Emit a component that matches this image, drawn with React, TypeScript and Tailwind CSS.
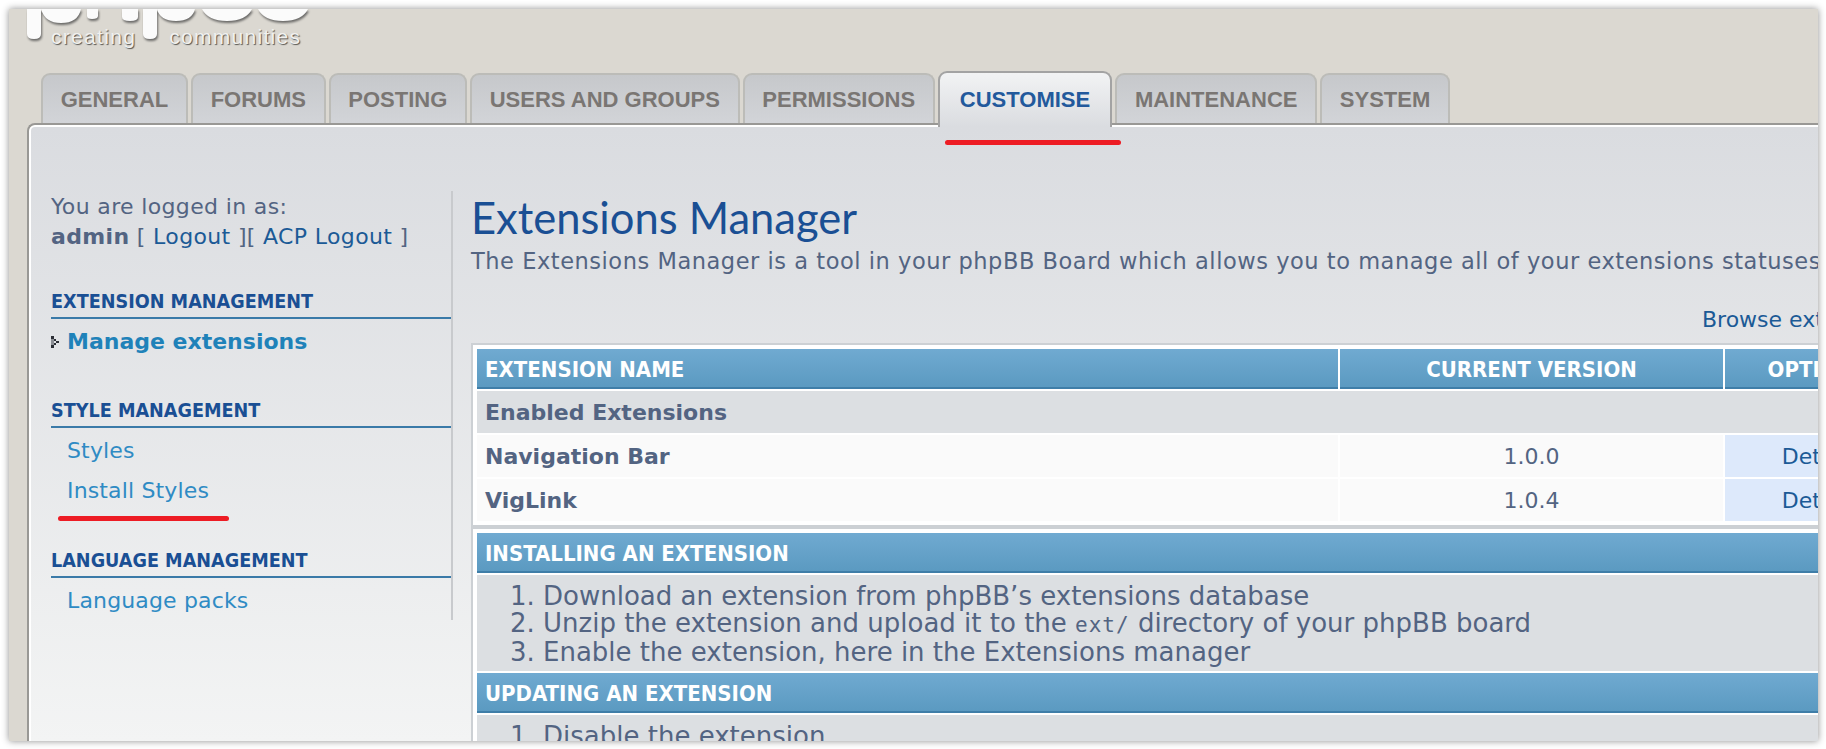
const tabs = ['GENERAL', 'FORUMS', 'POSTING', 'USERS AND GROUPS', 'PERMISSIONS', 'CUSTOMISE', 'MAINTENANCE', 'SYSTEM']

const rows = [
  { name: 'Navigation Bar', version: '1.0.0' },
  { name: 'VigLink', version: '1.0.4' },
]

function Logo() {
  return (
    <div className="relative h-[62px]">
      <svg width="320" height="40" viewBox="9 9 320 40" className="absolute top-0 left-0 drop-shadow-[1px_2px_1px_rgba(70,70,70,0.75)]">
        <path
          fill="#fbfbfb"
          d="M27 0H41V34Q41 39 34 39Q27 39 27 34Z M41 9Q45 23 61 23Q78 23 81 9Z M87 9H98V16Q98 19 92 19Q87 19 87 16Z M122 9H138V17Q138 21 130 21Q122 21 122 17Z M143 0H157V34Q157 39 150 39Q143 39 143 34Z M157 9Q160 21 176 21Q192 21 195 9Z M202 9Q208 21 227 21Q246 21 252 9Z M258 9Q264 21 283 21Q302 21 308 9Z"
        />
      </svg>
      <div className="absolute top-[16px] left-[42px] flex gap-[33px] font-['Liberation_Sans',sans-serif] text-[21px] leading-[24px] tracking-[1.3px] text-[#f1f1ef] [text-shadow:1px_1px_1px_#55534f]">
        <span>creating</span>
        <span>communities</span>
      </div>
    </div>
  )
}

function Tabs() {
  return (
    <div className="relative z-10 flex h-[52px] items-end gap-[3px] pl-[32px] font-['Liberation_Sans',sans-serif] text-[22px] leading-[24px] font-bold">
      {tabs.map(t =>
        t === 'CUSTOMISE' ? (
          <div key={t} className="-mb-[4px] h-[56px] rounded-t-[9px] border-2 border-b-0 border-[#a3a3a3] bg-gradient-to-b from-[#f2f3f4] to-[#dadce0] px-[20px] pt-[15px] text-[#22599c]">
            {t}
          </div>
        ) : (
          <div key={t} className="h-[50px] rounded-t-[9px] border-2 border-b-0 border-[#bcbcb8] bg-gradient-to-b from-[#c6c8cb] to-[#d2d4d8] px-[17.7px] pt-[13px] text-[#7a7673]">
            {t}
          </div>
        ),
      )}
    </div>
  )
}

function MenuHeading({ children }: { children: string }) {
  return (
    <h2 className="h-[30px] border-b-2 border-[#3a7aa8] font-['DejaVu_Sans_Condensed','DejaVu_Sans',sans-serif] text-[19.6px] leading-[26px] font-bold text-[#1a4f94]">
      {children}
    </h2>
  )
}

function MenuLink({ children }: { children: string }) {
  return <a className="block h-[40px] pl-[16px] text-[22px] leading-[40px] tracking-[0.15px] text-[#2f8bc4]">{children}</a>
}

function Sidebar() {
  return (
    <aside className="mt-[64px] h-[429px] w-[402px] shrink-0 border-r-2 border-[#c8cacd] pt-[1px] text-[22px]">
      <p className="leading-[30px] tracking-[0.35px] whitespace-nowrap text-[#536482]">
        You are logged in as:
        <br />
        <b>admin</b> [ <span className="text-[#1b5a96]">Logout</span> ][ <span className="text-[#1b5a96]">ACP Logout</span> ]
      </p>
      <div className="mt-[37px]">
        <MenuHeading>EXTENSION MANAGEMENT</MenuHeading>
        <a className="flex h-[46px] items-center pb-[1px] font-bold text-[#1f82b9]">
          <svg width="8" height="12" viewBox="0 0 8 12" className="mr-[8px] shrink-0" shapeRendering="crispEdges">
            <path fill="#2c2f36" d="M0 0h3v3H0zM3 3h2v2H3zM5 5h3v2H5zM3 7h2v2H3zM0 9h3v3H0z" />
            <path fill="#8d9096" d="M0 3h3v6H0z" />
          </svg>
          Manage extensions
        </a>
      </div>
      <div className="mt-[33px]">
        <MenuHeading>STYLE MANAGEMENT</MenuHeading>
        <div className="pt-[3px]">
          <MenuLink>Styles</MenuLink>
          <MenuLink>Install Styles</MenuLink>
        </div>
      </div>
      <div className="mt-[37px]">
        <MenuHeading>LANGUAGE MANAGEMENT</MenuHeading>
        <div className="pt-[3px]">
          <MenuLink>Language packs</MenuLink>
        </div>
      </div>
    </aside>
  )
}

const headCell = "flex h-[40px] items-center border-b-2 border-[#3f7ea8] bg-gradient-to-b from-[#70aad1] to-[#5b9ac1] pt-[2px] font-['DejaVu_Sans_Condensed','DejaVu_Sans',sans-serif] text-[22px] font-bold text-white"

function ExtensionTable() {
  return (
    <div className="border-2 border-[#ccd0d4] bg-white p-[4px]">
      <div className="grid grid-cols-[861px_383px_190px] gap-[2px]">
        <div className={`${headCell} pl-[8px]`}>EXTENSION NAME</div>
        <div className={`${headCell} justify-center`}>CURRENT VERSION</div>
        <div className={`${headCell} justify-center pr-[5px]`}>OPTIONS</div>
        <div className="col-span-3 flex h-[42px] items-center bg-[#dcdfe2] pl-[8px] font-bold">Enabled Extensions</div>
        {rows.map(r => (
          <div key={r.name} className="contents">
            <div className="flex h-[42px] items-center bg-[#fafafa] pl-[8px] font-bold">{r.name}</div>
            <div className="flex h-[42px] items-center justify-center bg-[#fafafa]">{r.version}</div>
            <div className="flex h-[42px] items-center justify-center bg-[#dde9fb] text-[#1b5a96]">Details</div>
          </div>
        ))}
      </div>
    </div>
  )
}

function Guide() {
  return (
    <div className="flex flex-col gap-[2px] border-2 border-[#ccd0d4] bg-white p-[4px]">
      <div className={`${headCell} pl-[8px]`}>INSTALLING AN EXTENSION</div>
      <ol className="h-[96px] list-decimal bg-[#dcdfe2] pt-[8px] pl-[66px] text-[26px] leading-[27px]">
        <li>Download an extension from phpBB’s extensions database</li>
        <li>
          Unzip the extension and upload it to the <code className="font-['DejaVu_Sans_Mono',monospace] text-[21px] tracking-[1px]">ext/</code> directory of your phpBB board
        </li>
        <li>Enable the extension, here in the Extensions manager</li>
      </ol>
      <div className={`${headCell} pl-[8px]`}>UPDATING AN EXTENSION</div>
      <ol className="h-[96px] list-decimal bg-[#dcdfe2] pt-[8px] pl-[66px] text-[26px] leading-[27px]">
        <li>Disable the extension</li>
      </ol>
    </div>
  )
}

export default function App() {
  return (
    <div className="h-[749px] w-[1826px] overflow-hidden bg-white pt-[9px] pl-[9px] font-['DejaVu_Sans',sans-serif]">
      <div className="relative flex h-[732px] w-[1809px] flex-col overflow-hidden bg-[#dbd8d1] shadow-[0_0_7px_rgba(0,0,0,0.45)]">
        <Logo />
        <Tabs />
        <div className="ml-[18px] flex min-h-0 flex-1 overflow-hidden rounded-tl-[8px] border-t-2 border-l-2 border-[#999895]">
          <div className="flex flex-1 gap-[18px] overflow-hidden rounded-tl-[6px] border-t-2 border-l-2 border-white bg-gradient-to-b from-[#dadce0] to-[#f3f4f4] pl-[20px] text-[#536482]">
            <Sidebar />
            <main className="w-[1420px] shrink-0 pt-[65px]">
              <h1 className="font-['Lato',sans-serif] text-[43.5px] leading-[50px] text-[#1a4f94]">Extensions Manager</h1>
              <p className="mt-[6px] text-[22.5px] leading-[26px] tracking-[0.54px] whitespace-nowrap">
                The Extensions Manager is a tool in your phpBB Board which allows you to manage all of your extensions statuses
              </p>
              <p className="mt-[33px] h-[36px] pl-[1231px] text-[22px] leading-[26px] whitespace-nowrap text-[#1b5a96]">Browse extensions</p>
              <div className="text-[22px]">
                <ExtensionTable />
                <Guide />
              </div>
            </main>
          </div>
        </div>
        <div className="absolute top-[131px] left-[936px] z-20 h-[5px] w-[176px] rounded-full bg-[#ed1c24]" />
        <div className="absolute top-[507px] left-[49px] h-[5px] w-[171px] rounded-full bg-[#ed1c24]" />
      </div>
    </div>
  )
}
